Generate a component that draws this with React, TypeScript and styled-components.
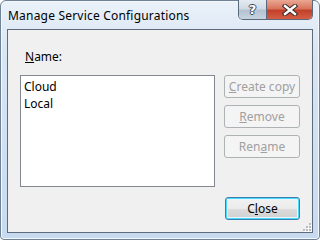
import React from "react";
import styled, { createGlobalStyle } from "styled-components";

const GlobalStyle = createGlobalStyle`
  html, body {
    margin: 0;
    padding: 0;
    background: #ffffff;
  }
  body {
    font-family: "Noto Sans", "Liberation Sans", sans-serif;
    font-size: 12px;
  }
`;

const configurations = ["Cloud", "Local"];

const App: React.FC = () => {
  return (
    <>
      <GlobalStyle />
      <Window>
        <TitleBar>
          <Title>Manage Service Configurations</Title>
          <CaptionButtons>
            <HelpButton>?</HelpButton>
            <CloseCaption>
              <svg width="16" height="12" viewBox="0 0 16 12">
                <path d="M3 2 L13 10 M13 2 L3 10" stroke="#3a2a28" strokeWidth="4.4" strokeLinecap="square" />
                <path d="M3 2 L13 10 M13 2 L3 10" stroke="#ffffff" strokeWidth="2.4" strokeLinecap="square" />
              </svg>
            </CloseCaption>
          </CaptionButtons>
        </TitleBar>
        <Client>
          <Label>
            <u>N</u>ame:
          </Label>
          <Body>
            <ListBox>
              {configurations.map((c) => (
                <ListItem key={c}>{c}</ListItem>
              ))}
            </ListBox>
            <ButtonColumn>
              <Button disabled>
                <u>C</u>reate copy
              </Button>
              <Button disabled>
                <u>R</u>emove
              </Button>
              <Button disabled>
                Ren<u>a</u>me
              </Button>
            </ButtonColumn>
          </Body>
          <Footer>
            <DefaultButton>
              C<u>l</u>ose
            </DefaultButton>
          </Footer>
          <Grip>
            <svg width="10" height="10" viewBox="0 0 10 10">
              {[
                [7, 1],
                [7, 4],
                [4, 4],
                [7, 7],
                [4, 7],
                [1, 7],
              ].map(([x, y]) => (
                <g key={`${x}-${y}`}>
                  <rect x={x + 1} y={y + 1} width="2" height="2" fill="#ffffff" />
                  <rect x={x} y={y} width="2" height="2" fill="#b8bcc2" />
                </g>
              ))}
            </svg>
          </Grip>
        </Client>
      </Window>
    </>
  );
};

export default App;

const Window = styled.div`
  box-sizing: border-box;
  width: 320px;
  height: 240px;
  border: 1px solid #6f8296;
  border-radius: 6px 6px 4px 4px;
  background: linear-gradient(#eaf1f9 0%, #d9e6f4 20%, #c6daf0 100%);
  box-shadow: inset 0 0 0 1px #f4f8fc;
  display: flex;
  flex-direction: column;
`;

const TitleBar = styled.div`
  height: 28px;
  display: flex;
  justify-content: space-between;
  align-items: flex-start;
  padding-left: 7px;
`;

const Title = styled.div`
  margin-top: 6px;
  font-size: 12px;
  color: #000000;
  letter-spacing: 0.2px;
`;

const CaptionButtons = styled.div`
  display: flex;
  margin-top: -1px;
  margin-right: 6px;
  border: 1px solid #5a6a7c;
  border-top: none;
  border-radius: 0 0 5px 5px;
  overflow: hidden;
  height: 19px;
`;

const HelpButton = styled.div`
  width: 27px;
  display: flex;
  align-items: center;
  justify-content: center;
  border-right: 1px solid #5a6a7c;
  background: linear-gradient(#e5ebf2 0%, #d0dae6 45%, #b4c2d2 55%, #c6d3e1 100%);
  color: #ffffff;
  font-family: "DejaVu Sans", sans-serif;
  font-weight: bold;
  font-size: 13px;
  text-shadow: 1px 0 0 #3d4650, -1px 0 0 #3d4650, 0 1px 0 #3d4650, 0 -1px 0 #3d4650;
`;

const CloseCaption = styled.div`
  width: 45px;
  display: flex;
  align-items: center;
  justify-content: center;
  background: linear-gradient(#eaa894 0%, #d9745c 45%, #c2402a 55%, #d45e45 100%);
`;

const Client = styled.div`
  position: relative;
  box-sizing: border-box;
  margin: 0 6px 6px 6px;
  flex: 1;
  border: 1px solid #5e6b7b;
  background: #f0f0f0;
  display: flex;
  flex-direction: column;
  padding: 16px 0 0 12px;
  color: #000000;
`;

const Label = styled.div`
  padding-left: 5px;
  height: 29px;
  line-height: 21px;
`;

const Body = styled.div`
  display: flex;
  gap: 9px;
  align-items: flex-start;
`;

const ListBox = styled.div`
  box-sizing: border-box;
  width: 195px;
  height: 112px;
  border: 1px solid #828790;
  background: #ffffff;
  padding: 2px 3px;
`;

const ListItem = styled.div`
  height: 17px;
  line-height: 17px;
`;

const ButtonColumn = styled.div`
  display: flex;
  flex-direction: column;
  gap: 7px;
`;

const Button = styled.button`
  box-sizing: border-box;
  width: 76px;
  height: 23px;
  padding: 0;
  border: 1px solid #adb2b5;
  border-radius: 3px;
  background: #f4f4f4;
  color: #a0a0a0;
  font-family: "Noto Sans", "Liberation Sans", sans-serif;
  font-size: 12px;
  line-height: 20px;
`;

const Footer = styled.div`
  display: flex;
  justify-content: flex-start;
  padding-left: 205px;
  margin-top: 10px;
`;

const DefaultButton = styled.button`
  box-sizing: border-box;
  width: 75px;
  height: 23px;
  padding: 0;
  border: 1px solid #3c7fb1;
  border-radius: 3px;
  box-shadow: inset 0 0 0 1px #48d8fb, inset 0 0 0 2px #e8f6fd;
  background: linear-gradient(#f2f2f2 0%, #ebebeb 50%, #dddddd 51%, #cfcfcf 100%);
  color: #000000;
  font-family: "Noto Sans", "Liberation Sans", sans-serif;
  font-size: 12px;
  line-height: 20px;
`;

const Grip = styled.div`
  position: absolute;
  right: 0;
  bottom: 0;
  width: 10px;
  height: 10px;
  line-height: 0;
`;
